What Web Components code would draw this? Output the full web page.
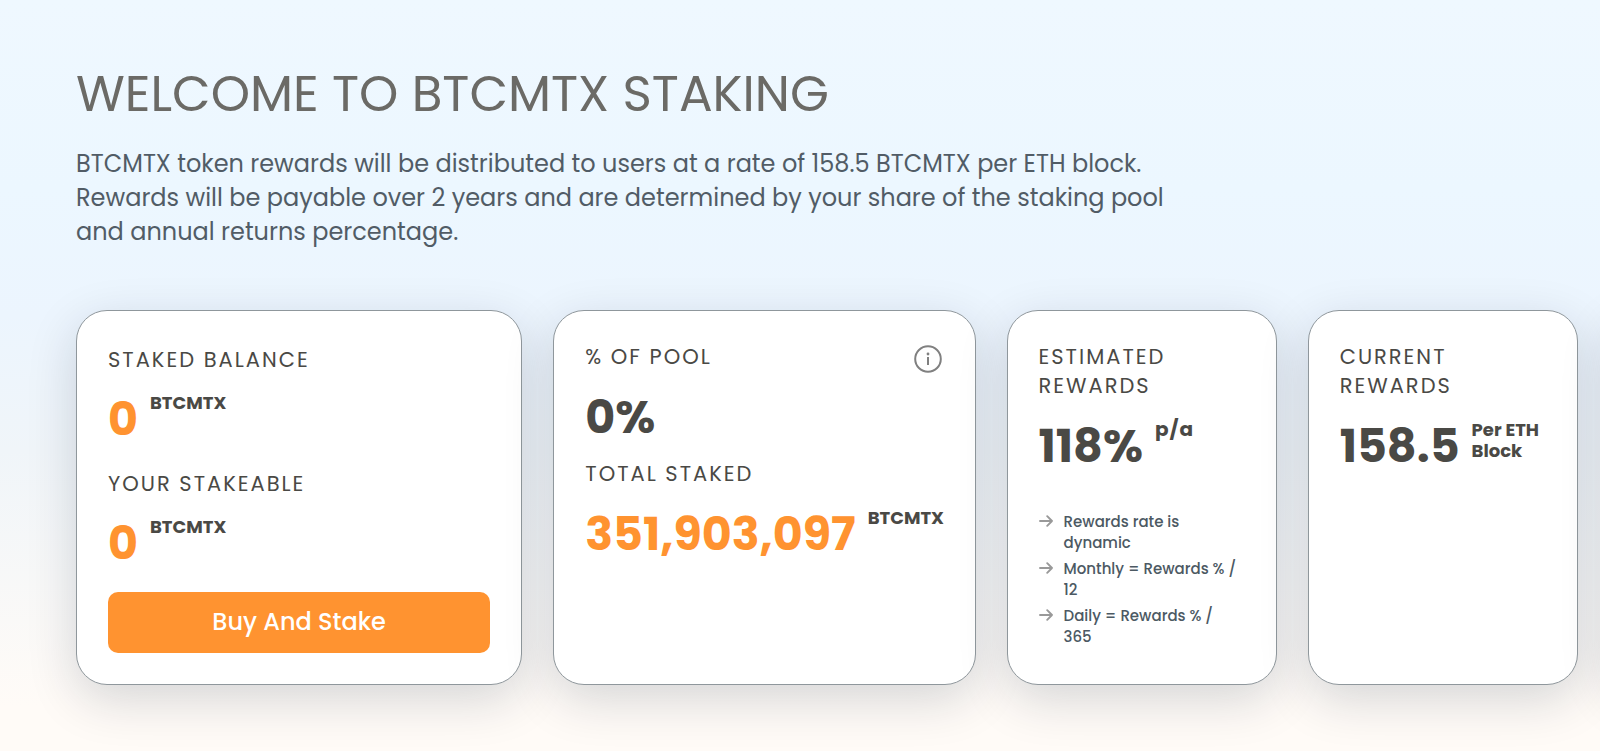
<!DOCTYPE html>
<html lang="en">
<head>
<meta charset="utf-8">
<meta name="viewport" content="width=device-width, initial-scale=1">
<title>BTCMTX Staking</title>
<style>
  body { margin: 0; font-family: Poppins, Lato, sans-serif; color: #4a4945; }
</style>
</head>
<body>
<staking-page>
  <h1 slot="title">WELCOME TO BTCMTX STAKING</h1>
  <p slot="intro">BTCMTX token rewards will be distributed to users at a rate of 158.5 BTCMTX per ETH block. Rewards will be payable over 2 years and are determined by your share of the staking pool and annual returns percentage.</p>

  <stake-card roomy>
    <stat-figure label="STAKED BALANCE" value="0" unit="BTCMTX" accent></stat-figure>
    <stat-figure label="YOUR STAKEABLE" value="0" unit="BTCMTX" accent></stat-figure>
    <stake-button slot="footer">Buy And Stake</stake-button>
  </stake-card>

  <stake-card>
    <info-button slot="corner"></info-button>
    <stat-figure label="% OF POOL" value="0%"></stat-figure>
    <stat-figure label="TOTAL STAKED" value="351,903,097" unit="BTCMTX" accent></stat-figure>
  </stake-card>

  <stake-card>
    <stat-figure label="ESTIMATED REWARDS" value="118%" unit="p/a" wide-unit></stat-figure>
    <note-list slot="footer">
      <li>Rewards rate is dynamic</li>
      <li>Monthly = Rewards % / 12</li>
      <li>Daily = Rewards % / 365</li>
    </note-list>
  </stake-card>

  <stake-card>
    <stat-figure label="CURRENT REWARDS" value="158.5" unit="Per ETH Block"></stat-figure>
  </stake-card>

  <stake-card></stake-card>
</staking-page>

<script>
/** <staking-page> — Heading, intro text and the row of cards. */
class StakingPage extends HTMLElement {
  constructor() {
    super();
    this.attachShadow({ mode: 'open' });
    this.shadowRoot.innerHTML = `
      <style>
        :host { display: block; box-sizing: border-box; min-height: 100vh;
          padding: 62px 22px 66px 76px; overflow: hidden;
          background: linear-gradient(#eff8ff 0%, #ecf7ff 25%,
            #ecf5fe 42%, #f0f5f9 60%, #fffbf7 94%); }
        ::slotted(h1) { margin: 0; font-size: 50px; line-height: 64px;
          font-weight: 400; color: #6b6a66; }
        ::slotted(p) { margin: 21px 0 0; max-width: 1120px;
          font-size: 24px; line-height: 34px; color: #515c66; }
        /* the last card runs off the right edge */
        .row { display: grid; gap: 31px; margin: 61px -301px 0 0;
          grid-template-columns: 446fr 422fr 270fr 270fr 270fr; }
      </style>
      <main>
        <slot name="title"></slot>
        <slot name="intro"></slot>
        <div class="row"><slot></slot></div>
      </main>`;
  }
}

/**
 * <stake-card> — Rounded white panel.
 *
 * Attributes:
 *   roomy — taller labels and more space between figures
 */
class StakeCard extends HTMLElement {
  constructor() {
    super();
    this.attachShadow({ mode: 'open' });
    this.shadowRoot.innerHTML = `
      <style>
        :host { display: flex; flex-direction: column; position: relative;
          box-sizing: border-box; min-width: 0; padding: 31px;
          border: 1px solid #8f979c; border-radius: 31px;
          background: #fff; box-shadow: 0 15px 50px rgba(0, 25, 50, 0.16);
          --label-height: 29px; --figure-gap: 15px; }
        :host([roomy]) { --label-height: 35px; --figure-gap: 11px; }
        .figures { display: flex; flex-direction: column; gap: 15px; }
        :host([roomy]) .figures { gap: 20px; }
        .footer { margin-top: auto; padding-top: 22px; }
        .corner { position: absolute; top: 34px; right: 33px; }
      </style>
      <div class="corner"><slot name="corner"></slot></div>
      <div class="figures"><slot></slot></div>
      <div class="footer"><slot name="footer"></slot></div>`;
  }
}

/**
 * <stat-figure> — A label above a large number with a raised unit.
 *
 * Attributes:
 *   label, value, unit — the texts
 *   accent             — orange number
 *   wide-unit          — larger, spaced unit
 */
class StatFigure extends HTMLElement {
  constructor() {
    super();
    this.attachShadow({ mode: 'open' });
  }

  connectedCallback() { this.render(); }

  _esc(s) { return String(s).replace(/&/g, '&amp;').replace(/</g, '&lt;'); }

  render() {
    const unit = this.getAttribute('unit');
    this.shadowRoot.innerHTML = `
      <style>
        :host { display: block; }
        .label { font-size: 21px; letter-spacing: 2px;
          line-height: var(--label-height, 29px); }
        .figure { display: flex; align-items: flex-start; gap: 12px;
          margin-top: var(--figure-gap, 15px); font-weight: 700; }
        .value { font-size: 46px; line-height: 53px; padding-top: 5px; }
        :host([accent]) .value { color: #ff9330; }
        .unit { font-size: 18px; line-height: 21px; padding-top: 4px; }
        :host([wide-unit]) .unit { font-size: 20px; letter-spacing: 1px; }
      </style>
      <div class="label">${this._esc(this.getAttribute('label'))}</div>
      <div class="figure">
        <span class="value">${this._esc(this.getAttribute('value'))}</span>
        ${unit ? `<span class="unit">${this._esc(unit)}</span>` : ''}
      </div>`;
  }
}

/** <stake-button> — Full-width orange action button. */
class StakeButton extends HTMLElement {
  constructor() {
    super();
    this.attachShadow({ mode: 'open' });
    this.shadowRoot.innerHTML = `
      <style>
        :host { display: block; }
        button { display: block; width: 100%; padding: 11px 12px 13px; border: 0;
          border-radius: 10px; background: #ff9330; color: #fff;
          font: inherit; font-size: 24px; line-height: 37px;
          font-weight: 500; cursor: pointer; }
        button:hover { background: #f58518; }
      </style>
      <button type="button"><slot></slot></button>`;
  }
}

/** <info-button> — Circled "i" in a card corner. */
class InfoButton extends HTMLElement {
  constructor() {
    super();
    this.attachShadow({ mode: 'open' });
    this.shadowRoot.innerHTML = `
      <style>
        :host { display: block; }
        button { display: block; padding: 0; border: 0; background: none;
          color: #808080; cursor: pointer; }
        svg { display: block; }
      </style>
      <button type="button" aria-label="About the pool">
        <svg width="28" height="28" viewBox="0 0 28 28" fill="none" stroke="currentColor" stroke-width="2">
          <circle cx="14" cy="14" r="12.8"/>
          <path d="M14 12v8"/>
          <circle cx="14" cy="9" r="1.4" fill="currentColor" stroke="none"/>
        </svg>
      </button>`;
  }
}

/** <note-list> — Small notes, each behind a grey arrow. Takes <li> children. */
class NoteList extends HTMLElement {
  constructor() {
    super();
    this.attachShadow({ mode: 'open' });
  }

  connectedCallback() { this.render(); }

  render() {
    const items = [...this.querySelectorAll('li')];
    this.shadowRoot.innerHTML = `
      <style>
        :host { display: block; font-size: 15px; line-height: 21px;
          font-weight: 500; color: #4c5963; }
        ul { display: grid; gap: 5px; margin: 0 0 6px; padding: 0; list-style: none; }
        li { display: flex; gap: 11px; }
        svg { flex-shrink: 0; margin-top: 3px; }
      </style>
      <ul>
        ${items.map(li => `<li>
          <svg width="14" height="14" viewBox="0 0 14 14" fill="none" stroke="#999"
            stroke-width="1.9" stroke-linecap="round" stroke-linejoin="round" aria-hidden="true">
            <path d="M1 7h12M8.2 2.2 13 7l-4.8 4.8"/>
          </svg>
          <span>${li.innerHTML}</span>
        </li>`).join('')}
      </ul>`;
  }
}

customElements.define('staking-page', StakingPage);
customElements.define('stake-card', StakeCard);
customElements.define('stat-figure', StatFigure);
customElements.define('stake-button', StakeButton);
customElements.define('info-button', InfoButton);
customElements.define('note-list', NoteList);
</script>
</body>
</html>
